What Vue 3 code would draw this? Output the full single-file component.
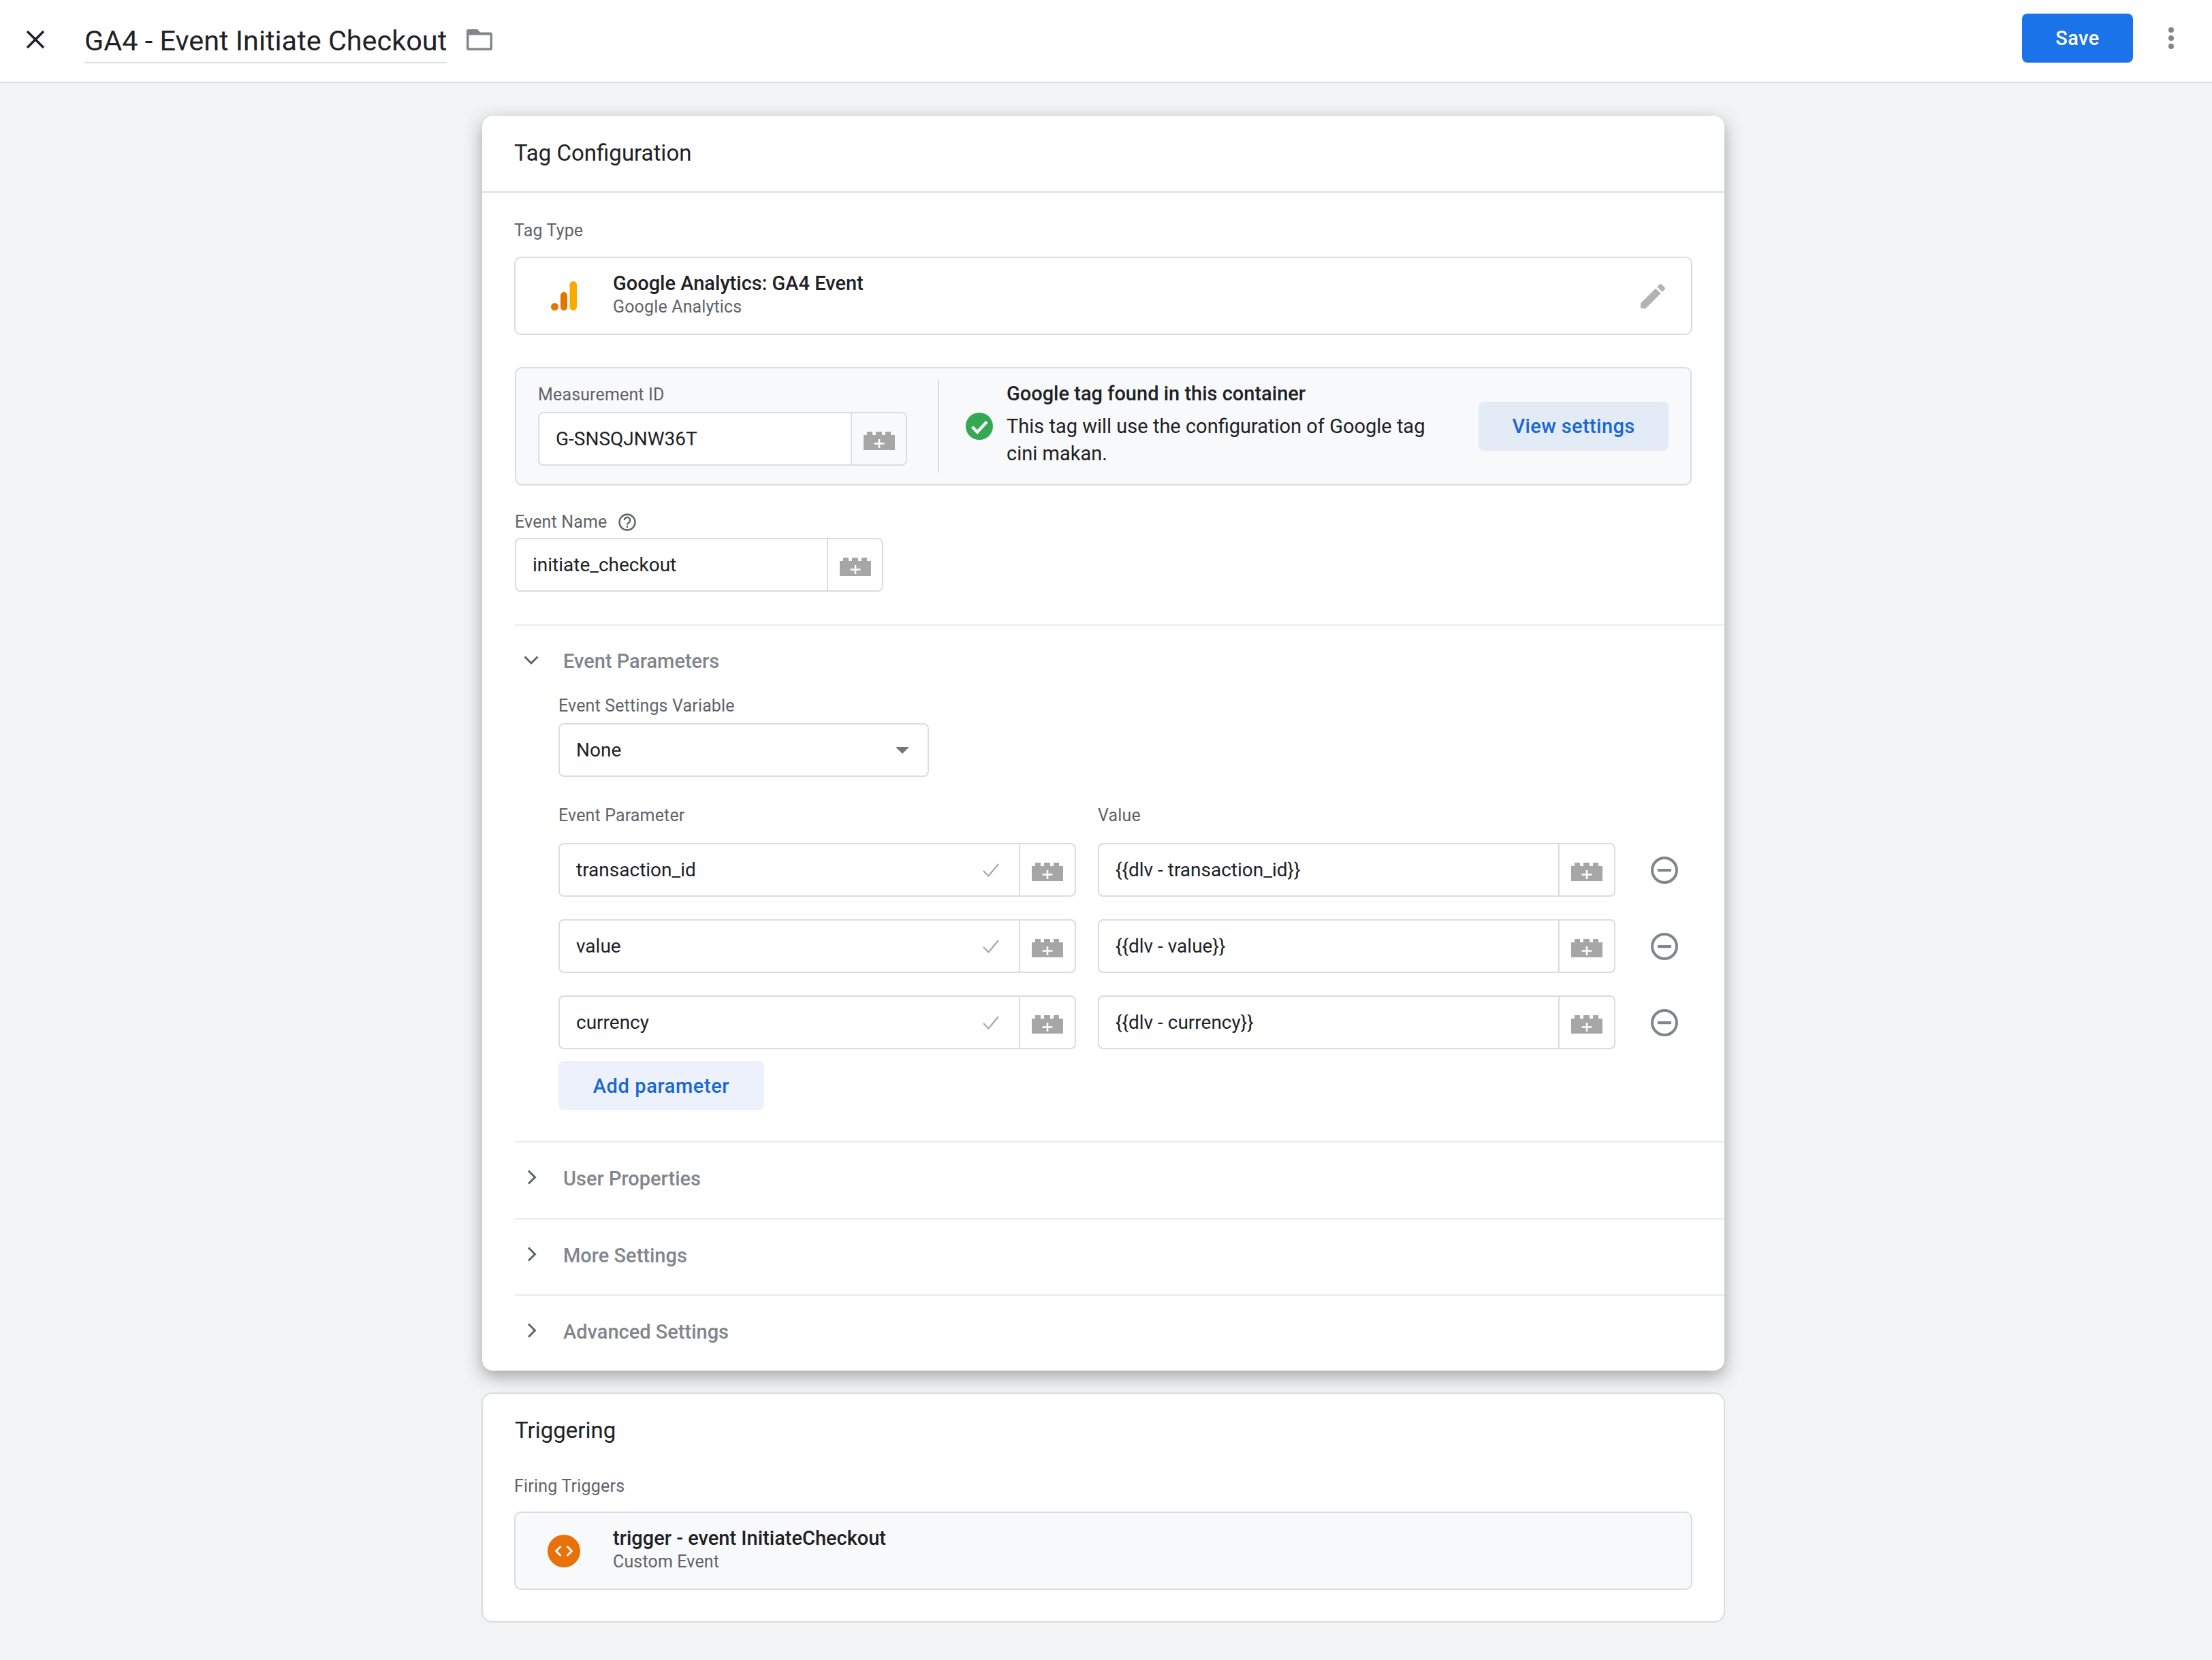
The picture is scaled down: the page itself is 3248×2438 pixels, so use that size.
<template>
  <div class="page">
    <header class="topbar">
      <button class="close-btn" aria-label="Close">
        <svg width="28" height="28" viewBox="0 0 28 28"><path d="M2 2l24 24M26 2L2 26" stroke="#202124" stroke-width="3.6" fill="none" /></svg>
      </button>
      <div class="title-wrap"><span class="title">GA4 - Event Initiate Checkout</span></div>
      <svg class="folder" width="38" height="31" viewBox="0 0 38 31">
        <path fill="#80868b" fill-rule="evenodd" d="M3 0h13l4 4.500h15a3 3 0 0 1 3 3V28a3 3 0 0 1-3 3H3a3 3 0 0 1-3-3V3a3 3 0 0 1 3-3zM3.500 8.500v19h31v-19z" />
      </svg>
      <div class="spacer"></div>
      <button class="save-btn">Save</button>
      <div class="kebab"><i></i><i></i><i></i></div>
    </header>

    <main class="body">
      <section class="card card-active">
        <h2 class="card-title card-title-line">Tag Configuration</h2>
        <div class="card-content">
          <div class="label tag-type-label">Tag Type</div>
          <div class="type-box">
            <svg class="ga-icon" width="38" height="43" viewBox="0 0 38 43">
              <rect x="27.500" y="0" width="10.500" height="43" rx="5.200" fill="#f9ab00" />
              <rect x="14" y="16" width="10" height="27" rx="5" fill="#e37400" />
              <circle cx="5.500" cy="37.500" r="5.500" fill="#e37400" />
            </svg>
            <div class="type-text">
              <div class="type-name">Google Analytics: GA4 Event</div>
              <div class="type-sub">Google Analytics</div>
            </div>
            <svg class="pencil" width="48" height="48" viewBox="0 0 24 24"><path fill="#b3b3b3" d="M3 17.250V21h3.750L17.810 9.940l-3.750-3.750L3 17.250zM20.710 7.040c.39-.39.39-1.020 0-1.410l-2.340-2.340c-.39-.39-1.020-.39-1.410 0l-1.830 1.830 3.750 3.750 1.830-1.830z" /></svg>
          </div>

          <div class="measure-box">
            <div class="measure-left">
              <div class="label measure-label">Measurement ID</div>
              <div class="field measure-field">
                <span class="field-text">G-SNSQJNW36T</span>
                <span class="var-btn var-btn-grey"><svg class="brick" width="46" height="27" viewBox="0 0 46 27"><path fill="#a6a6a6" d="M0 27V5h5V0h8v5h5V0h9v5h5V0h8v5h6v22z" /><path stroke="#fff" stroke-width="2.600" d="M23 11v13M15.500 17.500h15" /></svg></span>
              </div>
            </div>
            <div class="measure-right">
              <svg class="ok-icon" width="40" height="40" viewBox="0 0 40 40">
                <circle cx="20" cy="20" r="20" fill="#34a853" />
                <path d="M9.500 21l7.500 7.500 14-15" fill="none" stroke="#fff" stroke-width="4.400" />
              </svg>
              <div class="measure-text">
                <div class="measure-head">Google tag found in this container</div>
                <div class="measure-desc">This tag will use the configuration of Google tag<br />cini makan.</div>
              </div>
              <button class="soft-btn view-btn">View settings</button>
            </div>
          </div>

          <div class="label event-label">
            Event Name
            <svg class="help" width="26" height="26" viewBox="0 0 26 26">
              <circle cx="13" cy="13" r="11.500" fill="none" stroke="#5f6368" stroke-width="2.400" />
              <path d="M8.800 10a4.200 4.200 0 1 1 6.500 3.500c-1.400.9-2.300 1.500-2.300 3.200" fill="none" stroke="#5f6368" stroke-width="2.400" />
              <rect x="11.800" y="18.300" width="2.400" height="2.600" fill="#5f6368" />
            </svg>
          </div>
          <div class="field event-field">
            <span class="field-text">initiate_checkout</span>
            <span class="var-btn"><svg class="brick" width="46" height="27" viewBox="0 0 46 27"><path fill="#a6a6a6" d="M0 27V5h5V0h8v5h5V0h9v5h5V0h8v5h6v22z" /><path stroke="#fff" stroke-width="2.600" d="M23 11v13M15.500 17.500h15" /></svg></span>
          </div>
        </div>

        <div class="section section-open">
          <div class="section-head">
            <svg class="chevron" width="24" height="24" viewBox="0 0 24 24"><path d="M2.500 7.500L12 17l9.500-9.500" fill="none" stroke="#5f6368" stroke-width="3" /></svg>
            <span class="section-name">Event Parameters</span>
          </div>
          <div class="section-body">
            <div class="label settings-label">Event Settings Variable</div>
            <div class="field select-field">
              <span class="field-text">None</span>
              <span class="select-arrow"></span>
            </div>

            <div class="param-grid param-labels">
              <div class="label">Event Parameter</div>
              <div class="label">Value</div>
            </div>
            <div v-for="row in params" :key="row.name" class="param-grid param-row">
              <div class="field">
                <span class="field-text">{{ row.name }}</span>
                <svg class="check" width="26" height="22" viewBox="0 0 26 22"><path d="M2 12l7.500 7.500L24 2" fill="none" stroke="#a3a3a3" stroke-width="2" /></svg>
                <span class="var-btn"><svg class="brick" width="46" height="27" viewBox="0 0 46 27"><path fill="#a6a6a6" d="M0 27V5h5V0h8v5h5V0h9v5h5V0h8v5h6v22z" /><path stroke="#fff" stroke-width="2.600" d="M23 11v13M15.500 17.500h15" /></svg></span>
              </div>
              <div class="field">
                <span class="field-text">{{ row.value }}</span>
                <span class="var-btn"><svg class="brick" width="46" height="27" viewBox="0 0 46 27"><path fill="#a6a6a6" d="M0 27V5h5V0h8v5h5V0h9v5h5V0h8v5h6v22z" /><path stroke="#fff" stroke-width="2.600" d="M23 11v13M15.500 17.500h15" /></svg></span>
              </div>
              <svg class="remove" width="40" height="40" viewBox="0 0 40 40">
                <circle cx="20" cy="20" r="18" fill="none" stroke="#80868b" stroke-width="4" />
                <rect x="10" y="18" width="20" height="4.200" fill="#80868b" />
              </svg>
            </div>
            <button class="soft-btn add-btn">Add parameter</button>
          </div>
        </div>

        <div v-for="name in closedSections" :key="name" class="section section-closed">
          <div class="section-head">
            <svg class="chevron" width="24" height="24" viewBox="0 0 24 24"><path d="M8 2.500L17.500 12 8 21.500" fill="none" stroke="#5f6368" stroke-width="3" /></svg>
            <span class="section-name">{{ name }}</span>
          </div>
        </div>
      </section>

      <section class="card card-flat">
        <h2 class="card-title">Triggering</h2>
        <div class="card-content trigger-content">
          <div class="label trigger-label">Firing Triggers</div>
          <div class="type-box trigger-box">
            <svg class="trigger-icon" width="48" height="48" viewBox="0 0 48 48">
              <circle cx="24" cy="24" r="24" fill="#e8710a" />
              <path d="M19.500 17l-7 7 7 7M28.500 17l7 7-7 7" fill="none" stroke="#fff" stroke-width="2.800" />
            </svg>
            <div class="type-text">
              <div class="type-name">trigger - event InitiateCheckout</div>
              <div class="type-sub">Custom Event</div>
            </div>
          </div>
        </div>
      </section>
    </main>
  </div>
</template>

<script setup>
const params = [
  { name: 'transaction_id', value: '{{dlv - transaction_id}}' },
  { name: 'value', value: '{{dlv - value}}' },
  { name: 'currency', value: '{{dlv - currency}}' }
];
const closedSections = ['User Properties', 'More Settings', 'Advanced Settings'];
</script>

<style>
html, body {
  margin: 0;
  background: #f1f3f4;
}
</style>

<style scoped>
.page {
  width: 3248px;
  height: 2438px;
  overflow: hidden;
  background: #f1f3f4;
  font-family: Roboto, "Liberation Sans", sans-serif;
  color: #202124;
}

button {
  font-family: inherit;
  border: none;
  padding: 0;
  cursor: pointer;
}

.topbar {
  height: 120px;
  box-sizing: content-box;
  background: #fff;
  border-bottom: 2px solid #dadce0;
  display: flex;
  align-items: center;
}
.close-btn {
  background: none;
  margin-left: 38px;
  width: 28px;
  height: 28px;
  display: flex;
  margin-top: -4px;
}
.title-wrap {
  margin-left: 58px;
  border-bottom: 2px solid #dadce0;
  height: 62px;
  box-sizing: border-box;
  margin-top: 4px;
}
.title {
  font-size: 41.400px;
  line-height: 58px;
  color: #202124;
  display: block;
}
.folder {
  margin-left: 29px;
  margin-top: -3px;
}
.spacer {
  flex: 1;
}
.save-btn {
  width: 163px;
  height: 72px;
  background: #1a73e8;
  color: #fff;
  font-size: 29px;
  font-weight: 500;
  letter-spacing: 0.5px;
  border-radius: 8px;
  margin-top: -8px;
}
.kebab {
  width: 8px;
  margin-left: 52px;
  margin-right: 56px;
  margin-top: -8px;
  display: flex;
  flex-direction: column;
  gap: 4px;
}
.kebab i {
  width: 8px;
  height: 8px;
  border-radius: 50%;
  background: #80868b;
}

.body {
  padding: 48px 0 0 708px;
}
.card {
  width: 1824px;
  box-sizing: border-box;
  background: #fff;
  border-radius: 16px;
}
.card-active {
  height: 1843px;
  box-shadow: 0 8px 24px rgba(60, 64, 67, 0.45);
}
.card-flat {
  margin-top: 32px;
  height: 338px;
  border: 2px solid #dadce0;
  width: 1826px;
  margin-left: -1px;
}
.card-title {
  margin: 0;
  font-weight: 400;
  font-size: 33px;
  line-height: 40px;
  padding: 35px 47px 36px;
}
.card-title-line {
  border-bottom: 2px solid #dadce0;
}
.card-content {
  padding: 0 47px;
}
.label {
  font-size: 25px;
  line-height: 30px;
  color: #5f6368;
  letter-spacing: 0.15px;
}
.tag-type-label {
  padding-top: 41px;
  margin-bottom: 23px;
}
.type-box {
  height: 115px;
  box-sizing: border-box;
  border: 2px solid #dadce0;
  border-radius: 10px;
  display: flex;
  align-items: center;
  padding-left: 52px;
}
.type-text {
  margin-left: 53px;
  flex: 1;
}
.type-name {
  font-size: 29px;
  line-height: 31px;
  font-weight: 500;
  color: #202124;
}
.type-sub {
  font-size: 25px;
  line-height: 37px;
  color: #5f6368;
  letter-spacing: 0.15px;
}
.pencil {
  margin-right: 32px;
}

.measure-box {
  margin-top: 47px;
  height: 174px;
  box-sizing: border-box;
  border: 2px solid #dadce0;
  border-radius: 10px;
  background: #f8f9fa;
  display: flex;
  align-items: center;
  padding: 0 32px;
  margin-left: 1px;
  margin-right: 1px;
}
.measure-left {
  width: 589px;
  height: 136px;
  box-sizing: border-box;
  border-right: 2px solid #dadce0;
}
.measure-label {
  line-height: 30px;
  margin-top: 7px;
  margin-bottom: 10px;
}
.measure-field {
  width: 542px;
}
.measure-right {
  flex: 1;
  display: flex;
  align-items: center;
  padding-left: 39px;
}
.ok-icon {
  flex: none;
}
.measure-text {
  margin-left: 20px;
  margin-top: -8px;
  flex: 1;
}
.measure-head {
  font-size: 29px;
  font-weight: 500;
  line-height: 40px;
  margin-bottom: 8px;
}
.measure-desc {
  font-size: 29px;
  line-height: 40px;
}
.view-btn {
  width: 279px;
  height: 72px;
  background: #e3ebf6;
}
.soft-btn {
  color: #1967d2;
  font-size: 29px;
  font-weight: 500;
  letter-spacing: 0.4px;
  border-radius: 8px;
}

.event-label {
  display: flex;
  align-items: center;
  margin-top: 39px;
  margin-left: 1px;
  margin-bottom: 8px;
  height: 30px;
}
.help {
  margin-left: 17px;
}
.event-field {
  width: 541px;
  margin-left: 1px;
}

.field {
  height: 79px;
  box-sizing: border-box;
  border: 2px solid #dadce0;
  border-radius: 8px;
  background: #fff;
  display: flex;
  align-items: center;
}
.field-text {
  flex: 1;
  padding-left: 24px;
  font-size: 28px;
  white-space: nowrap;
}
.var-btn {
  width: 81px;
  height: 100%;
  flex: none;
  box-sizing: border-box;
  border-left: 2px solid #dadce0;
  display: flex;
  align-items: center;
  justify-content: center;
}
.var-btn-grey {
  background: #f8f9fa;
  border-radius: 0 6px 6px 0;
}
.brick {
  margin-top: 5px;
}
.check {
  margin-right: 28px;
}

.section {
  margin-left: 48px;
  border-top: 2px solid #e8eaed;
}
.section-open {
  margin-top: 48px;
  height: 759px;
  box-sizing: border-box;
}
.section-closed {
  height: 112.500px;
  box-sizing: border-box;
}
.section-head {
  height: 106px;
  display: flex;
  align-items: center;
}
.section-open .section-head {
  height: 103px;
}
.chevron {
  margin-left: 12px;
  margin-top: -4px;
  flex: none;
}
.section-name {
  margin-left: 35px;
  font-size: 29px;
  font-weight: 500;
  color: #80868b;
}
.section-body {
  padding-left: 64px;
}
.settings-label {
  margin-bottom: 10px;
}
.select-field {
  width: 544px;
}
.select-arrow {
  width: 0;
  height: 0;
  border-left: 10px solid transparent;
  border-right: 10px solid transparent;
  border-top: 10px solid #757575;
  margin-right: 27px;
}

.param-grid {
  display: grid;
  grid-template-columns: 760px 760px 40px;
  column-gap: 32px;
}
.param-grid .var-btn {
  width: 82px;
}
.param-labels {
  margin-top: 42px;
  margin-bottom: 25px;
}
.param-row {
  align-items: center;
  margin-bottom: 33px;
}
.param-row:last-of-type {
  margin-bottom: 0;
}
.remove {
  margin-left: 20px;
}
.add-btn {
  width: 302px;
  height: 72px;
  background: #edf1fb;
  margin-top: 17px;
  padding-top: 2px;
  letter-spacing: 0.6px;
}

.trigger-content {
  padding: 0 46px;
}
.trigger-label {
  padding-top: 10px;
  margin-bottom: 22px;
  letter-spacing: 0.2px;
}
.trigger-box {
  background: #f8f9fa;
  padding-left: 47px;
}
.trigger-box .type-text {
  margin-left: 48px;
}
.card-flat .card-title {
  padding: 34px 47px 37px;
}
</style>
